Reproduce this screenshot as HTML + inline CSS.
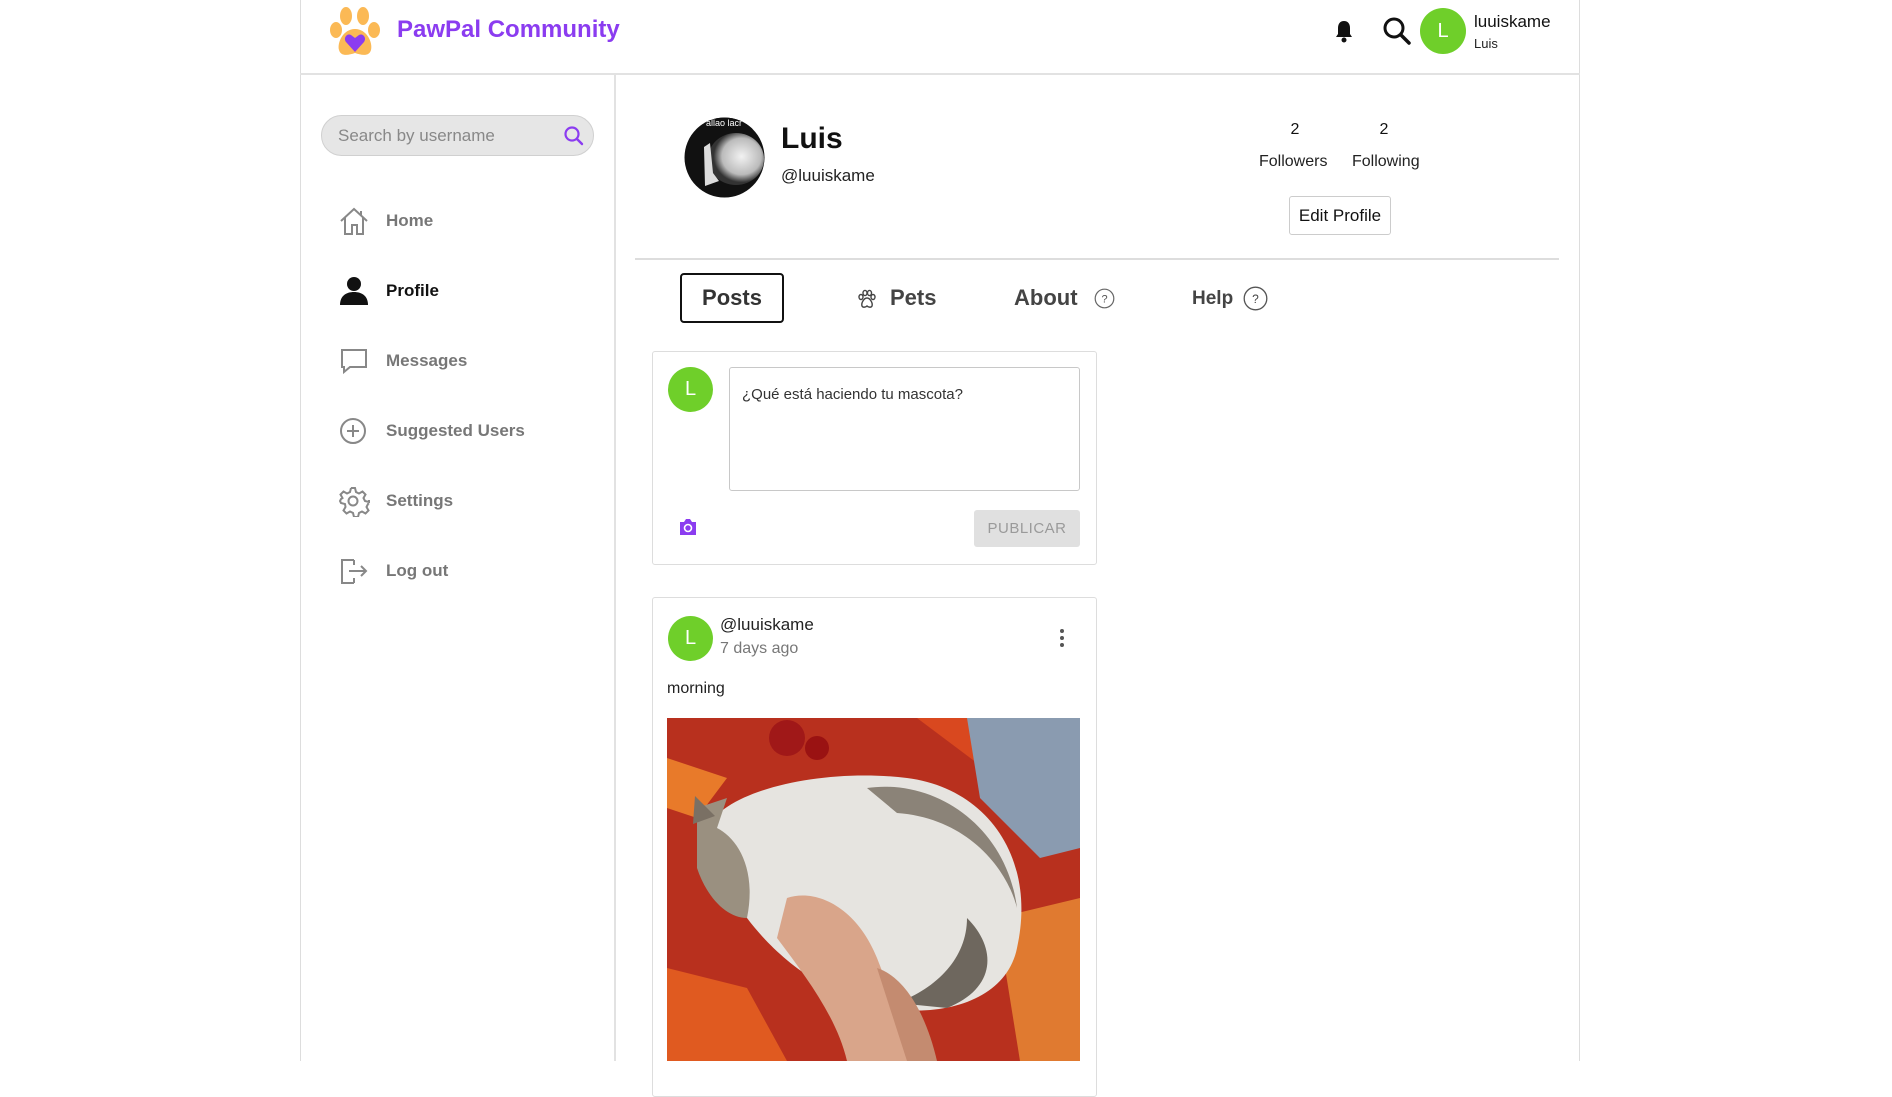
<!DOCTYPE html>
<html><head><meta charset="utf-8">
<style>
*{box-sizing:border-box;margin:0;padding:0}
body{width:1892px;height:1061px;overflow:hidden;background:#fff;font-family:"Liberation Sans",Arial,sans-serif;position:relative;color:#111}
.a{position:absolute}
.nav{position:absolute;left:338px;font-size:17px;font-weight:bold;color:#777;display:flex;align-items:center}
.nav svg{position:absolute;left:0}
.nav span{position:absolute;left:48px;white-space:nowrap}
.circ{border-radius:50%;background:#6fcf2a;color:#fff;display:flex;align-items:center;justify-content:center;font-size:20px}
</style></head><body>
<div class="a" style="left:300px;top:0;width:1px;height:1061px;background:#ddd"></div>
<div class="a" style="left:1579px;top:0;width:1px;height:1061px;background:#ddd"></div>
<div class="a" style="left:300px;top:73px;width:1280px;height:2px;background:#e2e2e2"></div>
<div class="a" style="left:614px;top:74px;width:2px;height:987px;background:#e2e2e2"></div>

<svg class="a" style="left:327px;top:5px" width="56" height="54" viewBox="0 0 56 54">
<ellipse cx="9" cy="25" rx="6" ry="8" fill="#fbb955"/>
<ellipse cx="19" cy="11" rx="6" ry="9" fill="#fbb955"/>
<ellipse cx="36" cy="11" rx="6" ry="9" fill="#fbb955"/>
<ellipse cx="47" cy="25" rx="6" ry="8" fill="#fbb955"/>
<path d="M28 24 C16 24 10 38 12 45 C14 52 22 50 28 48 C34 50 42 52 44 45 C46 38 40 24 28 24Z" fill="#fbb955"/>
<path d="M28 47 L19 37 C16 33 20 28 24 30 L28 33 L32 30 C36 28 40 33 37 37Z" fill="#8b3cf0"/>
</svg>
<div class="a" style="left:397px;top:16px;font-size:24px;font-weight:bold;color:#8b3cf0">PawPal Community</div>

<svg class="a" style="left:1334px;top:19px" width="20" height="24" viewBox="0 0 20 24"><path d="M10 2c-4 0-6 3-6 7v6l-2 3h16l-2-3V9c0-4-2-7-6-7z" fill="#111"/><circle cx="10" cy="21" r="2.5" fill="#111"/></svg>
<svg class="a" style="left:1382px;top:16px" width="30" height="30" viewBox="0 0 30 30"><circle cx="12" cy="12" r="9" fill="none" stroke="#111" stroke-width="3"/><path d="M19 19l8 8" stroke="#111" stroke-width="3.5" stroke-linecap="round"/></svg>
<div class="a circ" style="left:1420px;top:8px;width:46px;height:46px">L</div>
<div class="a" style="left:1474px;top:12px;font-size:17px;color:#111">luuiskame</div>
<div class="a" style="left:1474px;top:36px;font-size:13px;color:#222">Luis</div>

<div class="a" style="left:321px;top:115px;width:273px;height:41px;border-radius:21px;background:#e6e6e6;border:1px solid #d0d0d0"></div>
<div class="a" style="left:338px;top:126px;font-size:17px;color:#888">Search by username</div>
<svg class="a" style="left:563px;top:125px" width="22" height="22" viewBox="0 0 22 22"><circle cx="9" cy="9" r="6.5" fill="none" stroke="#8b3cf0" stroke-width="2.2"/><path d="M14 14l5 5" stroke="#8b3cf0" stroke-width="2.4" stroke-linecap="round"/></svg>

<div class="nav" style="top:221px"><svg style="top:-16px" width="32" height="32" viewBox="0 0 32 32" fill="none" stroke="#888" stroke-width="2"><path d="M3 16L16 4l13 12M7 12v17h7v-9h5v9h6V12M23 6v4"/></svg><span style="top:-10px">Home</span></div>
<div class="nav" style="top:291px;color:#111"><svg style="top:-16px" width="32" height="32" viewBox="0 0 32 32"><circle cx="16" cy="9" r="7" fill="#111"/><path d="M2 30c0-9 6-13 14-13s14 4 14 13z" fill="#111"/></svg><span style="top:-10px">Profile</span></div>
<div class="nav" style="top:361px"><svg style="top:-16px" width="32" height="32" viewBox="0 0 32 32" fill="none" stroke="#888" stroke-width="2"><path d="M4 5h24v17H12l-6 5v-5H4z"/></svg><span style="top:-10px">Messages</span></div>
<div class="nav" style="top:431px"><svg style="top:-16px" width="32" height="32" viewBox="0 0 32 32" fill="none" stroke="#888" stroke-width="2"><circle cx="15" cy="16" r="12"/><path d="M15 10v12M9 16h12"/></svg><span style="top:-10px">Suggested Users</span></div>
<div class="nav" style="top:501px"><svg style="top:-16px" width="32" height="32" viewBox="0 0 32 32" fill="none" stroke="#888" stroke-width="2"><circle cx="15" cy="16" r="4.5"/><path d="M13 3h4l1 4 3 1.5 3.5-2 3 3-2 3.5L27 16l4 1v-2 M13 3l-1 4-3 1.5-3.5-2-3 3 2 3.5L3 14l-1 2 1 2 4 1 .5 3-2 3.5 3 3 3.5-2 3 1.5 1 4h4l1-4 3-1.5 3.5 2 3-3-2-3.5 1.5-3 1-.5"/></svg><span style="top:-10px">Settings</span></div>
<div class="nav" style="top:571px"><svg style="top:-16px" width="32" height="32" viewBox="0 0 32 32" fill="none" stroke="#888" stroke-width="2"><path d="M16 5H4v23h12M11 16h17M23 11l5 5-5 5M16 5v5M16 23v5"/></svg><span style="top:-10px">Log out</span></div>

<svg class="a" style="left:684px;top:117px" width="81" height="81" viewBox="0 0 81 81">
<defs><clipPath id="c"><circle cx="40.5" cy="40.5" r="40"/></clipPath>
<radialGradient id="g" cx="0.6" cy="0.45" r="0.5"><stop offset="0" stop-color="#f2f2f2"/><stop offset="0.7" stop-color="#bbb"/><stop offset="1" stop-color="#333"/></radialGradient></defs>
<g clip-path="url(#c)"><rect width="81" height="81" fill="#111"/><ellipse cx="52" cy="42" rx="28" ry="26" fill="url(#g)"/><path d="M20 30l6-4 3 30 6 8-14 5z" fill="#ddd"/><rect x="20" y="0" width="60" height="12" fill="#111"/><text x="22" y="9" font-size="9" fill="#fff" font-family="Liberation Sans">allao lacr</text></g></svg>
<div class="a" style="left:781px;top:122px;font-size:30px;font-weight:bold">Luis</div>
<div class="a" style="left:781px;top:166px;font-size:17px;color:#222">@luuiskame</div>

<div class="a" style="left:1258px;top:121px;width:74px;text-align:center;font-size:16px">2</div>
<div class="a" style="left:1347px;top:121px;width:74px;text-align:center;font-size:16px">2</div>
<div class="a" style="left:1259px;top:153px;font-size:16px;color:#222">Followers</div>
<div class="a" style="left:1352px;top:153px;font-size:16px;color:#222">Following</div>
<div class="a" style="left:1289px;top:196px;width:102px;height:39px;border:1px solid #ccc;border-radius:3px;font-size:17px;display:flex;align-items:center;justify-content:center;color:#111">Edit Profile</div>

<div class="a" style="left:635px;top:258px;width:924px;height:2px;background:#ddd"></div>

<div class="a" style="left:680px;top:273px;width:104px;height:50px;border:2px solid #111;border-radius:4px;font-size:22px;font-weight:bold;color:#333;display:flex;align-items:center;justify-content:center">Posts</div>
<svg class="a" style="left:857px;top:289px" width="20" height="20" viewBox="0 0 20 20" fill="none" stroke="#444" stroke-width="1.4"><ellipse cx="4" cy="8" rx="2" ry="2.5"/><ellipse cx="8" cy="4" rx="2" ry="2.6"/><ellipse cx="12.5" cy="4" rx="2" ry="2.6"/><ellipse cx="16" cy="8" rx="2" ry="2.5"/><path d="M10 9c-3 0-6 5-5 8 1 2 4 1 5 0 1 1 4 2 5 0 1-3-2-8-5-8z"/></svg>
<div class="a" style="left:890px;top:285px;font-size:22px;font-weight:bold;color:#444">Pets</div>
<div class="a" style="left:1014px;top:285px;font-size:22px;font-weight:bold;color:#444">About</div>
<svg class="a" style="left:1094px;top:288px" width="21" height="21" viewBox="0 0 21 21"><circle cx="10.5" cy="10.5" r="9.3" fill="none" stroke="#666" stroke-width="1.2"/><text x="10.5" y="14.5" font-size="11" text-anchor="middle" fill="#555" font-family="Liberation Sans">?</text></svg>
<div class="a" style="left:1192px;top:288px;font-size:19px;font-weight:bold;color:#444">Help</div>
<svg class="a" style="left:1243px;top:286px" width="25" height="25" viewBox="0 0 25 25"><circle cx="12.5" cy="12.5" r="11.3" fill="none" stroke="#555" stroke-width="1.3"/><text x="12.5" y="17" font-size="12" text-anchor="middle" fill="#444" font-family="Liberation Sans">?</text></svg>

<div class="a" style="left:652px;top:351px;width:445px;height:214px;border:1px solid #ddd;border-radius:3px"></div>
<div class="a circ" style="left:668px;top:367px;width:45px;height:45px">L</div>
<div class="a" style="left:729px;top:367px;width:351px;height:124px;border:1px solid #c8c8c8;border-radius:3px"></div>
<div class="a" style="left:742px;top:386px;font-size:15px;color:#333">¿Qué está haciendo tu mascota?</div>
<svg class="a" style="left:678px;top:518px" width="20" height="18" viewBox="0 0 20 18"><path d="M2 4h4l2-3h4l2 3h4v13H2z" fill="#8b3cf0"/><circle cx="10" cy="10" r="3.5" fill="none" stroke="#fff" stroke-width="1.6"/></svg>
<div class="a" style="left:974px;top:510px;width:106px;height:37px;background:#e0e0e0;border-radius:3px;font-size:15px;color:#9a9a9a;display:flex;align-items:center;justify-content:center;letter-spacing:.5px">PUBLICAR</div>

<div class="a" style="left:652px;top:597px;width:445px;height:500px;border:1px solid #ddd;border-radius:3px"></div>
<div class="a circ" style="left:668px;top:616px;width:45px;height:45px">L</div>
<div class="a" style="left:720px;top:615px;font-size:17px;color:#222">@luuiskame</div>
<div class="a" style="left:720px;top:640px;font-size:16px;color:#777">7 days ago</div>
<svg class="a" style="left:1058px;top:628px" width="8" height="20" viewBox="0 0 8 20" fill="#555"><circle cx="4" cy="3" r="2"/><circle cx="4" cy="10" r="2"/><circle cx="4" cy="17" r="2"/></svg>
<div class="a" style="left:667px;top:680px;font-size:16px;color:#222">morning</div>

<svg class="a" style="left:667px;top:718px" width="413" height="343" viewBox="0 0 413 343">
<rect width="413" height="343" fill="#b8301e"/>
<path d="M0 0h413v120L330 60 250 0z" fill="#d9481f"/>
<path d="M300 0h113v130l-40 10-60-60z" fill="#8a9bb0"/>
<circle cx="120" cy="20" r="18" fill="#a01818"/><circle cx="150" cy="30" r="12" fill="#9a1212"/>
<path d="M0 40l60 20-30 40L0 90z" fill="#e87a2a"/>
<path d="M0 250l80 20 40 73H0z" fill="#e05a20"/>
<path d="M330 200l83-20v163h-60z" fill="#e07a30"/>
<path d="M40 110 C60 70 160 50 240 60 C320 70 370 140 350 230 C340 280 280 300 220 290 C160 280 110 240 80 200 C50 170 30 140 40 110Z" fill="#e6e4e0"/>
<path d="M200 70 C270 60 340 110 350 190 C340 150 300 100 230 95Z" fill="#8b8378"/>
<path d="M300 200 C330 230 330 270 280 290 L230 285 C270 270 300 240 300 200Z" fill="#6e675e"/>
<path d="M30 90 L60 80 L50 110 C70 120 90 150 80 200 C60 200 40 180 30 150Z" fill="#9a9080"/>
<path d="M28 78l20 20-22 8z" fill="#7a7064"/>
<path d="M120 180 C150 170 190 190 210 240 L250 343 H180 C170 300 140 260 110 220Z" fill="#d9a58a"/>
<path d="M210 250 C240 260 260 300 270 343 H240Z" fill="#c48b70"/>
</svg>
</body></html>
